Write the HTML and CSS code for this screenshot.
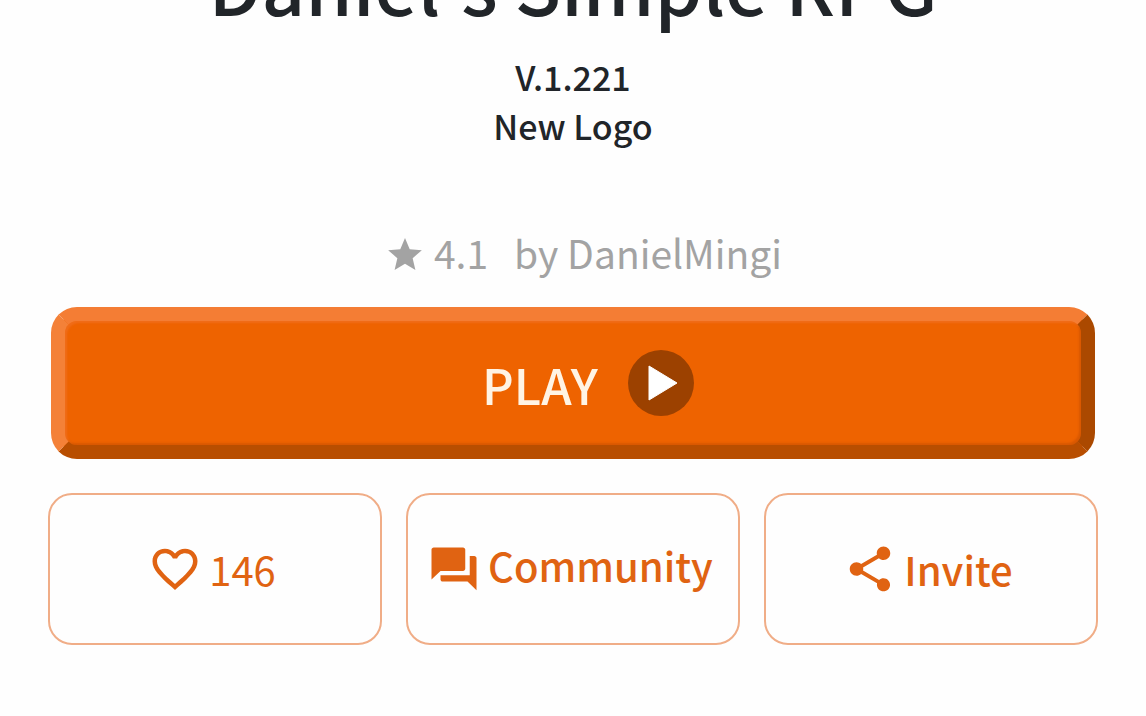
FILE: index.html
```
<!DOCTYPE html>
<html lang="en">
<head>
    <meta charset="UTF-8">
    <meta name="viewport" content="width=device-width, initial-scale=1.0">
    <title>Daniel's Simple RPG</title>
    <link rel="stylesheet" href="styles.css">
</head>
<body>
    <main class="container">
        <h1>Daniel's Simple RPG</h1>
        <p class="description">V.1.221<br>New Logo</p>
        <div class="meta">
            <span class="rating">
                <svg class="star" viewBox="2 2 20 19" aria-hidden="true"><path d="M12 17.27L18.18 21l-1.64-7.03L22 9.24l-7.19-.61L12 2 9.19 8.63 2 9.24l5.46 4.73L5.82 21z"/></svg>
                4.1
            </span>
            <span>by DanielMingi</span>
        </div>
        <button class="play">
            PLAY
            <svg viewBox="0 0 66 66" aria-hidden="true"><circle cx="33" cy="33" r="33" fill="#9c4100"/><path d="M21 16v34l28-17z" fill="#fff" stroke="#fff" stroke-linejoin="round"/></svg>
        </button>
        <div class="actions">
            <button class="action">
                <svg viewBox="0 0 24 24" aria-hidden="true"><path d="M16.5 3c-1.74 0-3.41.81-4.5 2.09C10.91 3.81 9.24 3 7.5 3 4.42 3 2 5.42 2 8.5c0 3.78 3.4 6.86 8.55 11.54L12 21.35l1.45-1.32C18.6 15.36 22 12.28 22 8.5 22 5.42 19.58 3 16.5 3zm-4.4 15.55l-.1.1-.1-.1C7.14 14.24 4 11.39 4 8.5 4 6.5 5.5 5 7.5 5c1.54 0 3.04.99 3.57 2.36h1.87C13.46 5.99 14.96 5 16.5 5c2 0 3.5 1.5 3.5 3.5 0 2.89-3.14 5.74-7.9 10.05z"/></svg>
                <span class="count">146</span>
            </button>
            <button class="action">
                <svg viewBox="0 0 24 24" aria-hidden="true"><path d="M21 6h-2v9H6v2c0 .55.45 1 1 1h11l4 4V7c0-.55-.45-1-1-1zm-4 6V3c0-.55-.45-1-1-1H3c-.55 0-1 .45-1 1v14l4-4h10c.55 0 1-.45 1-1z" transform="translate(0 .5) scale(1 .95)"/></svg>
                <span class="community">Community</span>
            </button>
            <button class="action">
                <svg viewBox="0 0 24 24" aria-hidden="true"><path d="M18 16.08c-.76 0-1.44.3-1.96.77L8.91 12.7c.05-.23.09-.46.09-.7s-.04-.47-.09-.7l7.05-4.11c.54.5 1.25.81 2.04.81 1.66 0 3-1.34 3-3s-1.34-3-3-3-3 1.34-3 3c0 .24.04.47.09.7L8.04 9.81C7.5 9.31 6.79 9 6 9c-1.66 0-3 1.34-3 3s1.34 3 3 3c.79 0 1.5-.31 2.04-.81l7.12 4.16c-.05.21-.08.43-.08.65 0 1.61 1.31 2.92 2.92 2.92s2.92-1.31 2.92-2.92-1.31-2.92-2.92-2.92z"/></svg>
                <span>Invite</span>
            </button>
        </div>
    </main>
</body>
</html>
```
FILE: styles.css
```
* { box-sizing: border-box; }
body { margin: 0; background-color: #fefefe; color: #212529; font-family: "Noto Sans CJK JP", sans-serif; }
button { font-family: inherit; cursor: pointer; }
.container { padding: 0 48px; overflow: hidden; text-align: center; }
h1 { margin: -45px 0 0; font-size: 76px; line-height: 56px; font-weight: 500; }
.description { margin: 41px 0 78px; font-size: 34px; line-height: 49px; font-weight: 500; }
.meta { display: flex; justify-content: center; gap: 26px; margin-left: 24px; font-size: 39px; line-height: 48px; color: #a3a3a3; }
.rating { display: flex; align-items: center; gap: 12px; }
.star { width: 34px; height: 32px; margin-top: 4px; fill: #a3a3a3; }
.play {
    display: flex; align-items: center; justify-content: center; gap: 30px;
    width: calc(100% - 6px); height: 152px; margin: 31px 3px 34px; padding: 0 0 0 30px;
    border: 14px solid; border-color: #f47d34 #ab4900 #b84e00 #f48138; border-radius: 26px;
    background-color: #ee6300; box-shadow: inset 2px 2px 2px #f06c18, inset -2px -2px 2px #d85800;
    color: #fff4e4; font-size: 49px; font-weight: 500;
}
.play svg { width: 66px; height: 66px; }
.actions { display: grid; grid-template-columns: repeat(3, 1fr); gap: 24px; }
.action {
    display: flex; align-items: center; justify-content: center; gap: 7px;
    height: 152px; padding: 0 6px 0 0; border: 2px solid #f0ad87; border-radius: 24px;
    background-color: #fefefe; color: #e06312; font-size: 40px; font-weight: 500;
}
.action svg { width: 54px; height: 54px; fill: #e06312; }
.count { font-weight: 400; }
.community { padding-bottom: 8px; }
```
